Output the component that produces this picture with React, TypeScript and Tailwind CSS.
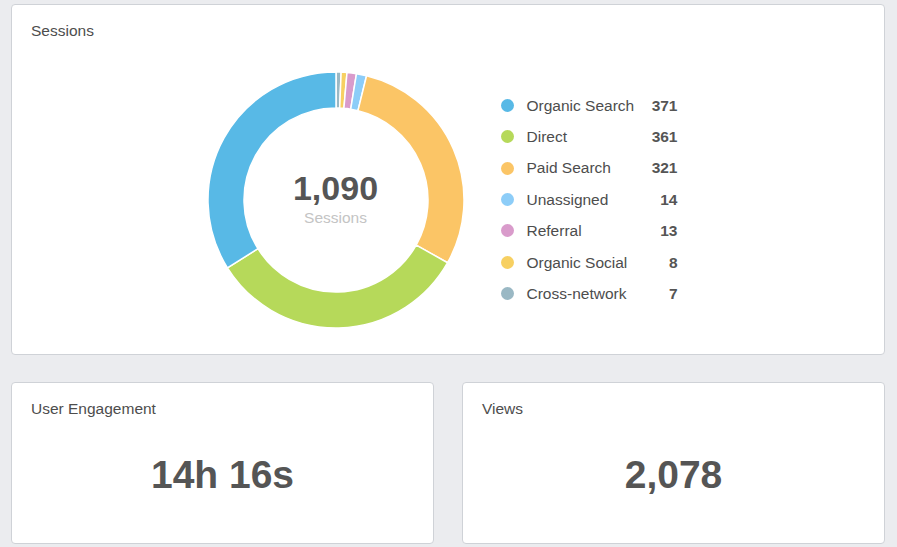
import React from "react";

type Item = { label: string; value: number; color: string };

const items: Item[] = [
  { label: "Organic Search", value: 371, color: "#58b9e6" },
  { label: "Direct", value: 361, color: "#b6d95a" },
  { label: "Paid Search", value: 321, color: "#fbc566" },
  { label: "Unassigned", value: 14, color: "#8dcdf8" },
  { label: "Referral", value: 13, color: "#d99bcb" },
  { label: "Organic Social", value: 8, color: "#f7d062" },
  { label: "Cross-network", value: 7, color: "#9ab8c4" },
];

function Donut() {
  const size = 258;
  const c = size / 2;
  const R = 128;
  const r = 92;
  const total = items.reduce((s, i) => s + i.value, 0);
  const order = [...items].reverse();
  let acc = 0;
  const pt = (rad: number, a: number) => {
    const t = (a * Math.PI) / 180;
    return [c + rad * Math.sin(t), c - rad * Math.cos(t)];
  };
  return (
    <svg width={size} height={size} viewBox={`0 0 ${size} ${size}`}>
      {order.map((it) => {
        const a0 = (acc / total) * 360;
        acc += it.value;
        const a1 = (acc / total) * 360;
        const large = a1 - a0 > 180 ? 1 : 0;
        const [x0, y0] = pt(R, a0);
        const [x1, y1] = pt(R, a1);
        const [x2, y2] = pt(r, a1);
        const [x3, y3] = pt(r, a0);
        const d = `M${x0} ${y0} A${R} ${R} 0 ${large} 1 ${x1} ${y1} L${x2} ${y2} A${r} ${r} 0 ${large} 0 ${x3} ${y3} Z`;
        return <path key={it.label} d={d} fill={it.color} stroke="#ffffff" strokeWidth={1.5} strokeLinejoin="round" />;
      })}
    </svg>
  );
}

export default function App() {
  return (
    <div
      className="min-h-[547px] w-[897px] bg-[#ebecef] pt-[4px] pl-[11px]"
      style={{ fontFamily: '"Liberation Sans", Arial, sans-serif' }}
    >
      <div className="w-[874px]">
        <div className="flex h-[351px] flex-col rounded-[4px] border border-[#cfd2d7] bg-white">
          <div className="pl-[19px] pt-[17px] text-[15.5px] leading-[18px] text-[#4d4d4d]">Sessions</div>
          <div className="flex flex-1 items-center justify-center pt-[5px] pr-[12px]">
            <div className="relative h-[258px] w-[258px]">
              <Donut />
              <div className="absolute inset-0 flex flex-col items-center justify-center pb-[2px]">
                <div className="text-[34px] font-bold leading-[36px] text-[#555555]">1,090</div>
                <div className="mt-[3px] text-[15.5px] leading-[18px] text-[#c4c4c4]">Sessions</div>
              </div>
            </div>
            <div className="ml-[36px] flex w-[177px] flex-col">
              {items.map((it) => (
                <div key={it.label} className="flex h-[31.4px] items-center">
                  <span className="h-[13px] w-[13px] shrink-0 rounded-full" style={{ backgroundColor: it.color }} />
                  <span className="ml-[13px] flex-1 text-[15.5px] text-[#4d4d4d]">{it.label}</span>
                  <span className="text-[15.5px] font-bold text-[#555555]">{it.value}</span>
                </div>
              ))}
            </div>
          </div>
        </div>
        <div className="mt-[27px] grid grid-cols-2 gap-[28px]">
          {[
            { title: "User Engagement", value: "14h 16s" },
            { title: "Views", value: "2,078" },
          ].map((c) => (
            <div key={c.title} className="h-[162px] rounded-[4px] border border-[#cfd2d7] bg-white">
              <div className="pl-[19px] pt-[17px] text-[15.5px] leading-[18px] text-[#4d4d4d]">{c.title}</div>
              <div className="mt-[35px] text-center text-[39px] font-bold leading-[44px] text-[#555555]">{c.value}</div>
            </div>
          ))}
        </div>
      </div>
    </div>
  );
}
